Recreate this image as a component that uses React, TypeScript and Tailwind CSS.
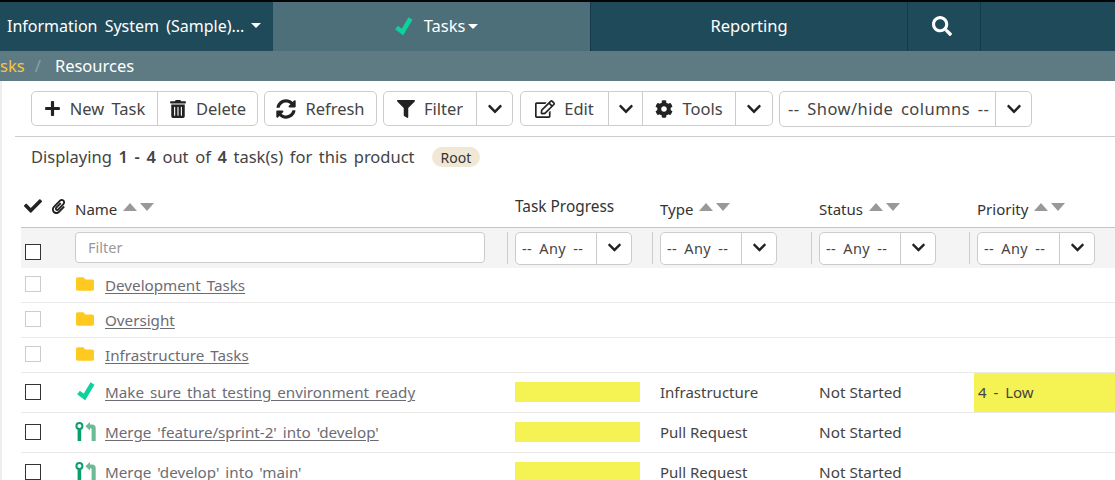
import React from "react";
import { FaPlus, FaTrashAlt, FaSyncAlt, FaFilter, FaRegEdit, FaChevronDown, FaCog, FaSearch, FaCheck, FaPaperclip, FaFolder } from "react-icons/fa";

const TaskCheck = ({ cls }: { cls: string }) => (
  <svg viewBox="0 0 20 18" className={cls}>
    <path d="M2.5 10.5 L8.5 15 L16.5 1.5" fill="none" stroke="#0fd19c" strokeWidth="4.6" strokeLinejoin="miter" />
  </svg>
);

const Merge = () => (
  <svg viewBox="0 0 21 19" className="w-[21px] h-[19px] shrink-0 -ml-[1px]">
    <circle cx="4.4" cy="4" r="3" fill="none" stroke="#0a9e6f" strokeWidth="2" />
    <rect x="2.6" y="7" width="3.6" height="12" fill="#0a9e6f" />
    <path d="M10.4 4.2 L15 0 L15 2.6 L17 2.6 Q20.7 2.6 20.7 6.2 L20.7 19 L16.6 19 L16.6 7.6 Q16.6 6.2 15.4 6.2 L15 6.2 L15 8.4 Z" fill="#6dbb96" />
  </svg>
);

const Sort = () => (
  <span className="inline-flex items-center gap-[3px] ml-[6px] -translate-y-[2px]">
    <span className="w-0 h-0 border-x-[7px] border-x-transparent border-b-[8px] border-b-[#999]" />
    <span className="w-0 h-0 border-x-[7px] border-x-transparent border-t-[8px] border-t-[#999]" />
  </span>
);

const Btn = ({ icon, label, cls }: { icon?: React.ReactNode; label?: string; cls: string }) => (
  <div className={`flex items-center justify-center gap-[9px] h-full border-r border-[#ccc] last:border-r-0 ${cls}`}>
    {icon}
    {label && <span className="[word-spacing:3px] pt-[2px]">{label}</span>}
  </div>
);

const Chevron = () => <FaChevronDown className="text-[16px] text-[#222]" />;

const Group = ({ children, cls }: { children: React.ReactNode; cls: string }) => (
  <div className={`flex h-[35px] border border-[#ccc] rounded-[5px] bg-white ${cls}`}>{children}</div>
);

const AnySelect = ({ w }: { w: string }) => (
  <div className={`flex h-[33px] border border-[#ccc] rounded-[5px] bg-white text-[14.5px] text-[#444] ${w}`}>
    <div className="flex-1 flex items-center pl-[6px] tracking-[0.4px] [word-spacing:3px] pt-[2px] whitespace-nowrap">-- Any --</div>
    <div className="w-[35px] border-l border-[#ccc] flex items-center justify-center"><FaChevronDown className="text-[15px] text-[#222] -translate-y-[1px]" /></div>
  </div>
);

const Sep = () => <div className="w-px h-[32px] bg-[#ccc]" />;

const Row = ({ h, box, icon, name, type, status, progress, priority }: { h: string; box: string; icon: React.ReactNode; name: string; type?: string; status?: string; progress?: boolean; priority?: string }) => (
  <div className={`flex items-center border-b border-[#e9e9e9] ${h}`}>
    <div className="w-[54px] pl-[4px] flex items-center">
      <div className={`w-4 h-4 border -translate-y-[1px] ${box}`} />
    </div>
    <div className="w-[440px] flex items-center">
      <div className="w-[29px] flex items-center pl-[1px] -translate-y-[1px]">{icon}</div>
      <a className="underline text-[#6c6c74] [word-spacing:2px] underline-offset-2 text-[15.2px] ml-[1px]">{name}</a>
    </div>
    <div className="w-[145px]">{progress && <div className="w-[125px] h-5 bg-[#f4f353] mb-[1px]" />}</div>
    <div className="w-[159px]">{type}</div>
    <div className="w-[155px] text-[15.3px]">{status}</div>
    <div className="flex-1 self-stretch flex items-center">
      {priority && <div className="w-full h-full bg-[#f4f353] flex items-center pl-[4px] [word-spacing:3px]">{priority}</div>}
    </div>
  </div>
);

const Folder = () => <FaFolder className="text-[18px] text-[#ffca1f]" />;

export default function App() {
  return (
    <div className="w-[1115px] h-[480px] overflow-hidden bg-white text-[15px] text-[#444] font-['Noto_Sans',sans-serif]">
      <div className="h-[2px] bg-[#050505]" />
      <div className="h-[49px] flex bg-[#1f4a59] text-white text-[16px]">
        <div className="w-[273px] flex items-center pl-[7px] gap-[7px] pb-[2px]">
          <span className="whitespace-nowrap [word-spacing:3px]">Information System (Sample)...</span>
          <span className="w-0 h-0 border-x-[5px] border-x-transparent border-t-[5px] border-t-white" />
        </div>
        <div className="w-[318px] bg-[#4c6f79] flex items-center justify-center border-r border-[#14394a] gap-[10px] pl-[9px] pb-[1px] text-[16.5px]">
          <TaskCheck cls="w-5 h-[18px]" />
          <span className="flex items-center gap-[3px]">Tasks<span className="w-0 h-0 border-x-[5px] border-x-transparent border-t-[5px] border-t-white" /></span>
        </div>
        <div className="w-[317px] flex items-center justify-center border-r border-[#14394a] pb-[1px] text-[16.5px]">Reporting</div>
        <div className="w-[73px] flex items-center justify-center border-r border-[#14394a]"><FaSearch className="text-[20px] -translate-y-[1px] -translate-x-[2px]" /></div>
      </div>
      <div className="h-[30px] bg-[#5e7b84] flex items-center text-[16.5px] overflow-hidden">
        <span className="text-[#f7c53f] -ml-[17px]">Tasks</span>
        <span className="text-[#8aa0a7] ml-[10px]">/</span>
        <span className="text-white ml-[14px]">Resources</span>
      </div>
      <div className="border-l-2 border-[#eee] h-[399px] overflow-hidden">
        <div className="ml-[13px]">
          <div className="flex items-center pt-[10px] pl-[16px] h-[56px] border-b border-[#ccc] text-[16.5px] pb-[10px]">
            <Group cls="w-[227px]">
              <Btn cls="w-[126px]" icon={<FaPlus className="text-[17px] text-[#222]" />} label="New Task" />
              <Btn cls="flex-1" icon={<FaTrashAlt className="text-[18px] text-[#222]" />} label="Delete" />
            </Group>
            <Group cls="w-[113px] ml-[6px]">
              <Btn cls="flex-1" icon={<FaSyncAlt className="text-[20px] text-[#222]" />} label="Refresh" />
            </Group>
            <Group cls="w-[130px] ml-[6px]">
              <Btn cls="w-[93px]" icon={<FaFilter className="text-[18px] text-[#222]" />} label="Filter" />
              <Btn cls="flex-1" icon={<Chevron />} />
            </Group>
            <Group cls="w-[253px] ml-[7px]">
              <Btn cls="w-[88px]" icon={<FaRegEdit className="text-[20px] text-[#222]" />} label="Edit" />
              <Btn cls="w-[34px]" icon={<Chevron />} />
              <Btn cls="w-[93px]" icon={<FaCog className="text-[18px] text-[#222]" />} label="Tools" />
              <Btn cls="flex-1" icon={<Chevron />} />
            </Group>
            <Group cls="w-[253px] ml-[6px] h-[36px]">
              <div className="flex-1 flex items-center pl-[8px] pt-[2px] [word-spacing:3px] tracking-[0.45px] whitespace-nowrap">-- Show/hide columns --</div>
              <div className="w-[36px] border-l border-[#ccc] flex items-center justify-center"><Chevron /></div>
            </Group>
          </div>
          <div className="flex items-center h-[38px] pt-[2px] pl-[16px] [word-spacing:2.3px] text-[16.5px]">
            <span>Displaying <b className="font-semibold">1 - 4</b> out of <b className="font-semibold">4</b> task(s) for this product</span>
            <span className="ml-[17px] px-[9px] h-[20px] flex items-center rounded-full bg-[#f0e8d5] text-[14px] text-[#333]">Root</span>
          </div>
          <div className="ml-[6px]">
            <div className="flex items-end h-[53px] border-b border-[#f2c744] pb-[7px] text-[#333] text-[15px]">
              <div className="w-[54px] flex items-center gap-[9px] pl-[3px] pb-[5px] text-[#222]">
                <FaCheck className="text-[18px]" />
                <FaPaperclip className="text-[15px]" />
              </div>
              <div className="w-[440px] flex items-center">Name<Sort /></div>
              <div className="w-[145px] text-[15.4px] pb-[2px]">Task Progress</div>
              <div className="w-[159px] flex items-center">Type<Sort /></div>
              <div className="w-[158px] flex items-center">Status<Sort /></div>
              <div className="flex-1 flex items-center">Priority<Sort /></div>
            </div>
            <div className="flex items-center h-[40px] bg-[#f4f4f4]">
              <div className="w-[54px] pl-[4px]"><div className="w-4 h-4 border border-[#333] bg-white mt-[7px]" /></div>
              <div className="w-[410px] h-[31px] -mt-[1px] border border-[#ccc] rounded-[4px] bg-white flex items-center pl-[12px] text-[#999] text-[14.5px]">Filter</div>
              <div className="w-[30px] pl-[22px] flex"><Sep /></div>
              <AnySelect w="w-[117px]" />
              <div className="w-[28px] pl-[20px] flex"><Sep /></div>
              <AnySelect w="w-[117px]" />
              <div className="w-[42px] pl-[34px] flex"><Sep /></div>
              <AnySelect w="w-[117px]" />
              <div className="w-[41px] pl-[33px] flex"><Sep /></div>
              <AnySelect w="w-[118px]" />
            </div>
            <Row h="h-[35px]" box="border-[#ccc]" icon={<Folder />} name="Development Tasks" />
            <Row h="h-[35px]" box="border-[#ccc]" icon={<Folder />} name="Oversight" />
            <Row h="h-[35px]" box="border-[#ccc]" icon={<Folder />} name="Infrastructure Tasks" />
            <Row h="h-[40px]" box="border-[#333]" icon={<TaskCheck cls="w-5 h-[18px]" />} name="Make sure that testing environment ready" progress type="Infrastructure" status="Not Started" priority="4 - Low" />
            <Row h="h-[40px]" box="border-[#333]" icon={<Merge />} name="Merge 'feature/sprint-2' into 'develop'" progress type="Pull Request" status="Not Started" />
            <Row h="h-[40px]" box="border-[#333]" icon={<Merge />} name="Merge 'develop' into 'main'" progress type="Pull Request" status="Not Started" />
          </div>
        </div>
      </div>
    </div>
  );
}
